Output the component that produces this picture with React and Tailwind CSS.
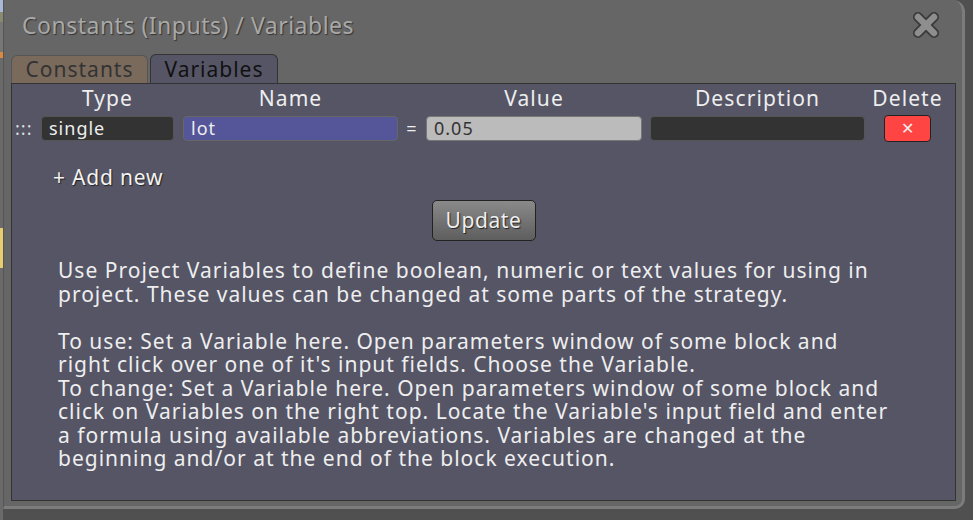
import React from "react";

const font = { fontFamily: '"Noto Sans", "Open Sans", sans-serif' };

function CloseIcon() {
  return (
    <svg width="30" height="30" viewBox="0 0 30 30">
      <g strokeLinecap="round">
        <line x1="7" y1="7" x2="23" y2="23" stroke="#3a3a3a" strokeWidth="10" />
        <line x1="23" y1="7" x2="7" y2="23" stroke="#3a3a3a" strokeWidth="10" />
        <line x1="7" y1="7" x2="23" y2="23" stroke="#8e8e8e" strokeWidth="6.5" />
        <line x1="23" y1="7" x2="7" y2="23" stroke="#8e8e8e" strokeWidth="6.5" />
      </g>
    </svg>
  );
}

export default function App() {
  return (
    <div
      className="w-[973px] h-[520px] overflow-hidden bg-[#505050] flex"
      style={font}
    >
      <div className="w-[3px] h-full flex flex-col shrink-0">
        <div className="h-[12px] bg-[#a9b8d6]" />
        <div className="h-[10px] bg-[#8a8a70]" />
        <div className="h-[30px] bg-[#777]" />
        <div className="h-[6px] bg-[#d98a40]" />
        <div className="h-[170px] bg-[#6a6a6a]" />
        <div className="h-[40px] bg-[#e8cc70]" />
        <div className="flex-1 bg-[#6a6a6a]" />
      </div>
      <div className="w-[962px] h-[509px] shrink-0 bg-[#666666] border-l border-[#555] border-r-[3px] border-b-[3px] border-r-[#7c7c7c] border-b-[#7c7c7c] rounded-br-[10px] rounded-tr-[12px] flex flex-col pl-[7px] pr-[6px]">
        <div className="h-[52px] flex items-center justify-between pl-[11px] pr-[15px] pb-[2px]">
          <div
            className="text-[23px] tracking-[0.5px] text-[#a8a8a8] leading-none"
            style={{ textShadow: "1px 1px 1px #333" }}
          >
            Constants (Inputs) / Variables
          </div>
          <CloseIcon />
        </div>
        <div className="flex items-end h-[31px] tracking-[1px]">
          <div className="w-[137px] h-[28px] bg-[#7a6a5c] rounded-t-[6px] border border-b-0 border-[#555] text-[21px] leading-[27px] text-[#333] text-center">
            Constants
          </div>
          <div className="w-[128px] h-[29px] ml-[2px] bg-[#555566] rounded-t-[6px] border border-b-0 border-[#333] text-[21px] leading-[28px] text-[#111] text-center">
            Variables
          </div>
        </div>
        <div className="w-[945px] h-[418px] bg-[#555566] border border-[#333] flex flex-col">
          <div className="flex pl-[3px] text-[21px] tracking-[1.1px] leading-[28px] text-[#eeeeee] h-[28px]">
            <div className="w-[26px]" />
            <div className="w-[133px] text-center">Type</div>
            <div className="w-[215px] ml-[9px] text-center">Name</div>
            <div className="w-[28px]" />
            <div className="w-[216px] text-center">Value</div>
            <div className="w-[215px] ml-[8px] text-center">Description</div>
            <div className="w-[47px] ml-[19px] flex justify-center whitespace-nowrap">Delete</div>
          </div>
          <div className="flex pl-[3px] items-center h-[28px] mt-[2px] tracking-[1px]">
            <div className="w-[26px] text-[#ddd] text-[18px] leading-none tracking-[1px]">:::</div>
            <div className="w-[133px] h-[25px] rounded-[4px] bg-[#333333] border border-[#555] text-[18px] leading-[22px] text-[#eee] pl-[7px]">
              single
            </div>
            <div className="w-[215px] h-[25px] ml-[9px] rounded-[4px] bg-[#555599] border border-[#666] text-[18px] leading-[22px] text-[#eee] pl-[7px]">
              lot
            </div>
            <div className="w-[28px] text-center text-[18px] text-[#eee]">=</div>
            <div className="w-[216px] h-[25px] rounded-[4px] bg-[#bbbbbb] border border-[#777] text-[18px] leading-[22px] text-[#333] pl-[7px]">
              0.05
            </div>
            <div className="w-[215px] h-[25px] ml-[8px] rounded-[4px] bg-[#333333] border border-[#555]" />
            <div className="w-[47px] h-[27px] ml-[19px] rounded-[4px] bg-[#ff4444] border border-[#222] flex items-center justify-center text-[#eee] text-[16px] leading-none">
              ✕
            </div>
          </div>
          <div
            className="mt-[22px] ml-[41px] text-[21px] tracking-[0.8px] leading-[26px] text-[#f2f2f2]"
            style={{ textShadow: "1px 1px 1px #222" }}
          >
            + Add new
          </div>
          <div className="flex justify-center mt-[10px]">
            <div
              className="w-[104px] h-[41px] rounded-[5px] border border-[#222] bg-gradient-to-b from-[#8a8a8a] to-[#5e5e5e] text-[21px] tracking-[0.6px] leading-[38px] text-center text-[#eeeeee]"
              style={{ textShadow: "1px 1px 1px #222" }}
            >
              Update
            </div>
          </div>
          <div className="mt-[18px] ml-[46px] text-[21px] tracking-[1px] leading-[23.5px] text-[#eeeeee] whitespace-nowrap">
            Use Project Variables to define boolean, numeric or text values for using in
            <br />
            project. These values can be changed at some parts of the strategy.
            <br />
            <br />
            To use: Set a Variable here. Open parameters window of some block and
            <br />
            right click over one of it's input fields. Choose the Variable.
            <br />
            To change: Set a Variable here. Open parameters window of some block and
            <br />
            click on Variables on the right top. Locate the Variable's input field and enter
            <br />
            a formula using available abbreviations. Variables are changed at the
            <br />
            beginning and/or at the end of the block execution.
          </div>
        </div>
      </div>
    </div>
  );
}
